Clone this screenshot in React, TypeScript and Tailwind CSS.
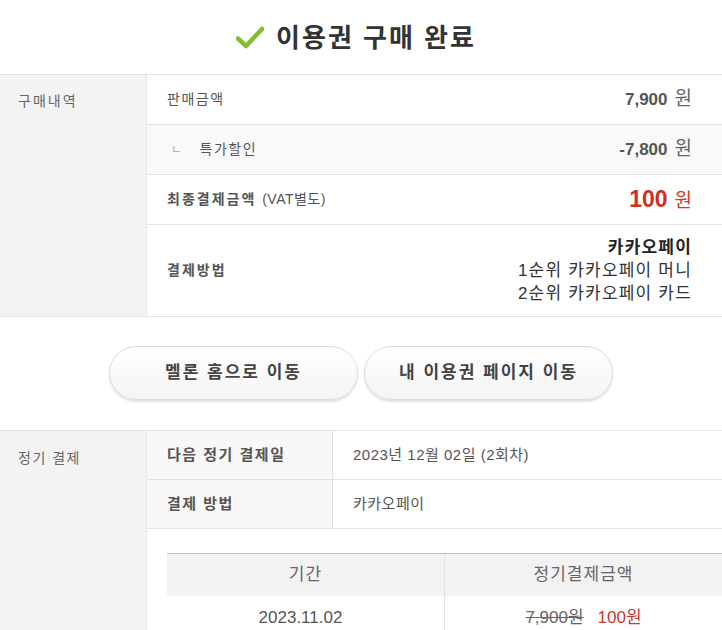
const font = "font-['Liberation_Sans','Noto_Sans_CJK_KR',sans-serif]";

const CheckMark = () => (
  <svg width="28" height="24" viewBox="0 0 28 24" className="mr-[12px]">
    <path d="M2 12.5 L10 20 L26 3" fill="none" stroke="#84bd32" strokeWidth="4.5" strokeLinecap="round" strokeLinejoin="round" />
  </svg>
);

const Won = ({ red }: { red?: boolean }) => (
  <span className={`ml-[7px] text-[19px] font-normal ${red ? "text-[#d03a26]" : "text-[#666]"}`}>원</span>
);

export default function App() {
  return (
    <div className={`w-[722px] bg-white ${font} text-[#555]`}>
      {/* title */}
      <div className="flex h-[74px] items-center justify-center pt-[2px] pr-[10px]">
        <CheckMark />
        <h1 className="text-[26px] font-bold tracking-[2px] text-[#333]">이용권 구매 완료</h1>
      </div>

      {/* purchase details */}
      <section className="flex border-y border-[#e2e2e2]">
        <div className="w-[147px] shrink-0 border-r border-[#e8e8e8] bg-[#f3f3f3] pl-[18px] pt-[16px] text-[14px] tracking-[2px] text-[#666]">
          구매내역
        </div>
        <div className="flex-1">
          <div className="flex h-[50px] items-center justify-between border-b border-[#e2e2e2] pl-[20px] pr-[30px]">
            <span className="text-[14px] tracking-[1.5px] text-[#555]">판매금액</span>
            <span className="text-[17px] font-bold text-[#555]">
              7,900<Won />
            </span>
          </div>
          <div className="flex h-[50px] items-center justify-between border-b border-[#e2e2e2] bg-[#f9f9f9] pl-[24px] pr-[30px]">
            <span className="text-[14px] tracking-[1.5px] text-[#555]">
              <span className="mr-[16px] text-[12px] text-[#aaa]">ㄴ</span>특가할인
            </span>
            <span className="text-[17px] font-bold text-[#555]">
              -7,800<Won />
            </span>
          </div>
          <div className="flex h-[50px] items-center justify-between border-b border-[#e2e2e2] pl-[20px] pr-[30px]">
            <span className="text-[14px] font-bold tracking-[2px] text-[#555]">
              최종결제금액 <span className="font-normal tracking-[0.5px]">(VAT별도)</span>
            </span>
            <span className="text-[23px] font-bold text-[#d0301f]">
              100<Won red />
            </span>
          </div>
          <div className="flex h-[91px] items-center justify-between pl-[20px] pr-[30px]">
            <span className="text-[14px] font-bold tracking-[2px] text-[#555]">결제방법</span>
            <div className="text-right text-[17px] leading-[23px] tracking-[1.2px] text-[#333]">
              <div className="font-bold text-[#222]">카카오페이</div>
              <div>1순위 카카오페이 머니</div>
              <div>2순위 카카오페이 카드</div>
            </div>
          </div>
        </div>
      </section>

      {/* buttons */}
      <div className="flex h-[113px] items-center justify-center gap-[6px] pb-[2px]">
        {["멜론 홈으로 이동", "내 이용권 페이지 이동"].map((t) => (
          <button
            key={t}
            className="h-[54px] w-[249px] rounded-full border border-[#dcdcdc] bg-gradient-to-b from-white to-[#f4f4f4] text-[17px] font-bold tracking-[2px] text-[#444] shadow-[0_2px_2px_rgba(0,0,0,0.12)]"
          >
            {t}
          </button>
        ))}
      </div>

      {/* recurring payment */}
      <section className="flex border-t border-[#e2e2e2]">
        <div className="w-[147px] shrink-0 border-r border-[#e8e8e8] bg-[#f3f3f3] pl-[18px] pt-[17px] text-[14px] tracking-[1.5px] text-[#666]">
          정기 결제
        </div>
        <div className="flex-1">
          <div className="flex h-[49px] border-b border-[#e2e2e2]">
            <div className="flex w-[186px] items-center border-r border-[#e2e2e2] bg-[#f8f8f8] pl-[20px] text-[15px] font-bold tracking-[1.5px] text-[#555]">
              다음 정기 결제일
            </div>
            <div className="flex items-center pl-[20px] text-[15px] tracking-[0.5px] text-[#555]">2023년 12월 02일 (2회차)</div>
          </div>
          <div className="flex h-[49px] border-b border-[#e2e2e2]">
            <div className="flex w-[186px] items-center border-r border-[#e2e2e2] bg-[#f8f8f8] pl-[20px] text-[15px] font-bold tracking-[1.5px] text-[#555]">
              결제 방법
            </div>
            <div className="flex items-center pl-[20px] text-[15px] tracking-[0.5px] text-[#555]">카카오페이</div>
          </div>
          <div className="pl-[20px] pt-[24px]">
            <div className="grid grid-cols-[277px_1fr] border-t border-[#bdbdbd]">
              <div className="flex h-[42px] items-center justify-center bg-[#f2f2f2] text-[17px] tracking-[1px] text-[#666]">기간</div>
              <div className="flex h-[42px] items-center justify-center border-l border-[#e2e2e2] bg-[#f2f2f2] text-[17px] tracking-[1px] text-[#666]">
                정기결제금액
              </div>
              <div className="flex h-[44px] items-center justify-center pr-[10px] text-[17px] text-[#555]">2023.11.02</div>
              <div className="flex h-[44px] items-center justify-center border-l border-[#e2e2e2] text-[17px]">
                <span className="text-[#666] line-through">7,900원</span>
                <span className="ml-[14px] text-[#c7392b]">100원</span>
              </div>
            </div>
          </div>
        </div>
      </section>
    </div>
  );
}
